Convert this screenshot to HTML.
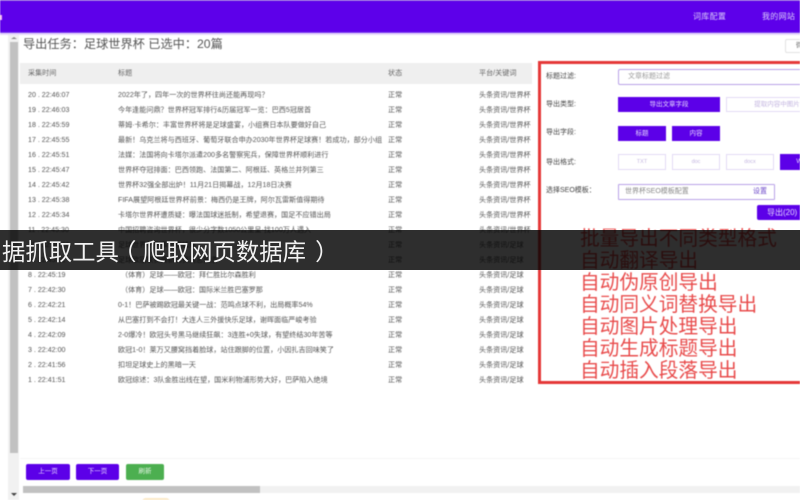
<!DOCTYPE html>
<html lang="zh">
<head>
<meta charset="utf-8">
<style>
html,body{margin:0;padding:0;width:800px;height:500px;overflow:hidden;background:#fff;font-family:"Liberation Sans","Noto Sans CJK SC",sans-serif}
#base{position:absolute;left:0;top:0;width:800px;height:500px;overflow:hidden;filter:blur(.65px)}
.a{position:absolute;white-space:nowrap}
.c{font-size:7.1px;line-height:15px;height:15px;color:#555}
.b{position:absolute;box-sizing:border-box;text-align:center;font-size:6.5px;white-space:nowrap}
.p{background:#5c00e8;color:#e6d8ff}
.o{background:#fff;border:1px solid #e3daf5;color:#c4b6e0}
.l{font-size:7px;color:#444;line-height:12px}
</style>
</head>
<body>
<div id="base">
  <div class="a" style="left:0;top:0;width:800px;height:33px;background:#5d00ea;border-top:1px solid #8a55d8;box-sizing:border-box;border-bottom:1px solid #7a3df0"></div>
  <div class="a" style="left:0;top:33px;width:800px;height:2px;background:#e6d8fb"></div>
  <div class="a" style="left:0;top:15px;width:2px;height:5px;background:#f2b8f0"></div>
  <div class="a" style="left:693px;top:11px;font-size:8px;line-height:12px;color:#dcd0fa;letter-spacing:.3px">词库配置</div>
  <div class="a" style="left:762px;top:11px;font-size:8px;line-height:12px;color:#dcd0fa;letter-spacing:.3px">我的网站</div>

  <div class="a" style="left:8px;top:35px;width:11px;height:465px;background:#f1f1f1"></div>
  <div class="a" style="left:10px;top:42px;width:8px;height:411px;background:#c1c1c1"></div>
  <div class="a" style="left:11px;top:37px;width:6px;height:2px;background:#888;clip-path:polygon(50% 0,100% 100%,0 100%)"></div>
  <div class="a" style="left:11px;top:493px;width:6px;height:3px;background:#444;clip-path:polygon(0 0,100% 0,50% 100%)"></div>

  <div class="a" style="left:23px;top:36px;font-size:12.2px;line-height:17px;color:#555">导出任务：足球世界杯 已选中：20篇</div>

  <div class="a" style="left:785px;top:39px;width:15px;height:14px;border:1px solid #e2e2e2;border-right:0;box-sizing:border-box;border-radius:2px 0 0 2px;font-size:6.5px;line-height:12px;color:#666;padding-left:10px;overflow:hidden">微</div>

  <div class="a" style="left:20px;top:63px;width:512px;height:21px;background:#efefef"></div>
  <div class="a c" style="left:28px;top:66px;color:#666">采集时间</div>
  <div class="a c" style="left:118px;top:66px;color:#666">标题</div>
  <div class="a c" style="left:388px;top:66px;color:#666">状态</div>
  <div class="a c" style="left:479px;top:66px;color:#666">平台/关键词</div>

  <div class="a c" style="left:28px;top:88px">20 . 22:46:07</div><div class="a c" style="left:118px;top:88px">2022年了，四年一次的世界杯往尚还能再现吗？</div><div class="a c" style="left:388px;top:88px">正常</div><div class="a c" style="left:479px;top:88px">头条资讯/世界杯</div>
  <div class="a c" style="left:28px;top:103px">19 . 22:46:03</div><div class="a c" style="left:118px;top:103px">今年逢能问鼎？世界杯冠军排行&amp;历届冠军一览：巴西5冠居首</div><div class="a c" style="left:388px;top:103px">正常</div><div class="a c" style="left:479px;top:103px">头条资讯/世界杯</div>
  <div class="a c" style="left:28px;top:118px">18 . 22:45:59</div><div class="a c" style="left:118px;top:118px">蒂姆·卡希尔：丰富世界杯将是足球盛宴，小组赛日本队要做好自己</div><div class="a c" style="left:388px;top:118px">正常</div><div class="a c" style="left:479px;top:118px">头条资讯/世界杯</div>
  <div class="a c" style="left:28px;top:133px">17 . 22:45:55</div><div class="a c" style="left:118px;top:133px">最新！乌克兰将与西班牙、葡萄牙联合申办2030年世界杯足球赛！若成功，部分小组</div><div class="a c" style="left:388px;top:133px">正常</div><div class="a c" style="left:479px;top:133px">头条资讯/世界杯</div>
  <div class="a c" style="left:28px;top:148px">16 . 22:45:51</div><div class="a c" style="left:118px;top:148px">法媒：法国将向卡塔尔派遣200多名警察宪兵，保障世界杯顺利进行</div><div class="a c" style="left:388px;top:148px">正常</div><div class="a c" style="left:479px;top:148px">头条资讯/世界杯</div>
  <div class="a c" style="left:28px;top:163px">15 . 22:45:47</div><div class="a c" style="left:118px;top:163px">世界杯夺冠排面：巴西领跑、法国第二、阿根廷、英格兰并列第三</div><div class="a c" style="left:388px;top:163px">正常</div><div class="a c" style="left:479px;top:163px">头条资讯/世界杯</div>
  <div class="a c" style="left:28px;top:178px">14 . 22:45:42</div><div class="a c" style="left:118px;top:178px">世界杯32强全部出炉！11月21日揭幕战，12月18日决赛</div><div class="a c" style="left:388px;top:178px">正常</div><div class="a c" style="left:479px;top:178px">头条资讯/世界杯</div>
  <div class="a c" style="left:28px;top:193px">13 . 22:45:38</div><div class="a c" style="left:118px;top:193px">FIFA展望阿根廷世界杯前景：梅西仍是王牌，阿尔瓦雷斯值得期待</div><div class="a c" style="left:388px;top:193px">正常</div><div class="a c" style="left:479px;top:193px">头条资讯/世界杯</div>
  <div class="a c" style="left:28px;top:208px">12 . 22:45:34</div><div class="a c" style="left:118px;top:208px">卡塔尔世界杯遭质疑：曝法国球迷抵制，希望退赛，国足不应错出局</div><div class="a c" style="left:388px;top:208px">正常</div><div class="a c" style="left:479px;top:208px">头条资讯/世界杯</div>
  <div class="a c" style="left:28px;top:223px">11 . 22:45:30</div><div class="a c" style="left:118px;top:223px">中国招聘咨询世界杯，很少分字数1050公里呈-找100万人遇入</div><div class="a c" style="left:388px;top:223px">正常</div><div class="a c" style="left:479px;top:223px">头条资讯/世界杯</div>
  <div class="a c" style="left:28px;top:238px">10 . 22:45:26</div><div class="a c" style="left:118px;top:238px">足球世界杯赛事比赛结果</div><div class="a c" style="left:388px;top:238px">正常</div><div class="a c" style="left:479px;top:238px">头条资讯/足球</div>
  <div class="a c" style="left:28px;top:253px">9 . 22:45:22</div><div class="a c" style="left:118px;top:253px">足球欧冠联赛最新比赛消息报道</div><div class="a c" style="left:388px;top:253px">正常</div><div class="a c" style="left:479px;top:253px">头条资讯/足球</div>
  <div class="a c" style="left:28px;top:268px">8 . 22:45:19</div><div class="a c" style="left:121px;top:268px">（体育）足球——欧冠：拜仁胜比尔森胜利</div><div class="a c" style="left:388px;top:268px">正常</div><div class="a c" style="left:479px;top:268px">头条资讯/足球</div>
  <div class="a c" style="left:28px;top:283px">7 . 22:42:30</div><div class="a c" style="left:121px;top:283px">（体育）足球——欧冠：国际米兰胜巴塞罗那</div><div class="a c" style="left:388px;top:283px">正常</div><div class="a c" style="left:479px;top:283px">头条资讯/足球</div>
  <div class="a c" style="left:28px;top:298px">6 . 22:42:21</div><div class="a c" style="left:118px;top:298px">0-1！巴萨被踢欧冠最关键一战：范鸣点球不利，出局概率54%</div><div class="a c" style="left:388px;top:298px">正常</div><div class="a c" style="left:479px;top:298px">头条资讯/足球</div>
  <div class="a c" style="left:28px;top:313px">5 . 22:42:14</div><div class="a c" style="left:118px;top:313px">从巴塞打到不会打！大连人三外援快乐足球，谢晖面临严峻考验</div><div class="a c" style="left:388px;top:313px">正常</div><div class="a c" style="left:479px;top:313px">头条资讯/足球</div>
  <div class="a c" style="left:28px;top:328px">4 . 22:42:09</div><div class="a c" style="left:118px;top:328px">2-0爆冷！欧冠头号黑马继续狂飙：3连胜+0失球，有望终结30年苦等</div><div class="a c" style="left:388px;top:328px">正常</div><div class="a c" style="left:479px;top:328px">头条资讯/足球</div>
  <div class="a c" style="left:28px;top:343px">3 . 22:42:00</div><div class="a c" style="left:118px;top:343px">欧冠1-0！莱万又腰窝挡着脸球，站住跟脚的位置，小因扎吉回味笑了</div><div class="a c" style="left:388px;top:343px">正常</div><div class="a c" style="left:479px;top:343px">头条资讯/足球</div>
  <div class="a c" style="left:28px;top:358px">2 . 22:41:56</div><div class="a c" style="left:118px;top:358px">扣坦足球史上的黑暗一天</div><div class="a c" style="left:388px;top:358px">正常</div><div class="a c" style="left:479px;top:358px">头条资讯/足球</div>
  <div class="a c" style="left:28px;top:373px">1 . 22:41:51</div><div class="a c" style="left:118px;top:373px">欧冠综述：3队金胜出线在望，国米利物浦形势大好，巴萨陷入绝境</div><div class="a c" style="left:388px;top:373px">正常</div><div class="a c" style="left:479px;top:373px">头条资讯/足球</div>

  <div class="a" style="left:20px;top:458px;width:780px;height:1px;background:#f6f6f6"></div>
  <div class="b" style="left:26px;top:464px;width:44px;height:16px;line-height:16px;background:#5c00e8;color:#e6d8ff;border-radius:2px">上一页</div>
  <div class="b" style="left:76px;top:464px;width:43px;height:16px;line-height:16px;background:#5c00e8;color:#e6d8ff;border-radius:2px">下一页</div>
  <div class="b" style="left:126px;top:464px;width:38px;height:16px;line-height:16px;background:#4caf50;color:#e6f5e6;border-radius:2px">刷新</div>
  <div class="a" style="left:23px;top:486px;width:777px;height:7px;background:#f1f1f1"></div>
  <div class="a" style="left:23px;top:486px;width:237px;height:7px;background:#c1c1c1"></div>
  <div class="a" style="left:142px;top:498px;width:28px;height:4px;border-radius:14px 14px 0 0;background:#fbe9c8"></div>

  <div class="a l" style="left:546px;top:71px">标题过滤:</div>
  <div class="a" style="left:618px;top:69px;width:190px;height:16px;box-sizing:border-box;border:1px solid #b9a2e8;border-radius:2px;font-size:7px;line-height:14px;color:#999;padding-left:9px">文章标题过滤</div>
  <div class="a l" style="left:546px;top:99px">导出类型:</div>
  <div class="b p" style="left:618px;top:97px;width:102px;height:15px;line-height:15px">导出文章字段</div>
  <div class="b o" style="left:726px;top:97px;width:102px;height:15px;line-height:13px">提取内容中图片</div>
  <div class="a l" style="left:546px;top:127px">导出字段:</div>
  <div class="b p" style="left:618px;top:126px;width:48px;height:15px;line-height:15px">标题</div>
  <div class="b p" style="left:672px;top:126px;width:48px;height:15px;line-height:15px">内容</div>
  <div class="a l" style="left:546px;top:157px">导出格式:</div>
  <div class="b o" style="left:618px;top:154px;width:48px;height:16px;line-height:14px;font-size:5.5px">TXT</div>
  <div class="b o" style="left:672px;top:154px;width:48px;height:16px;line-height:14px;font-size:5.5px">doc</div>
  <div class="b o" style="left:726px;top:154px;width:48px;height:16px;line-height:14px;font-size:5.5px">docx</div>
  <div class="b p" style="left:780px;top:154px;width:48px;height:16px;line-height:16px">Word</div>
  <div class="a l" style="left:546px;top:185px">选择SEO模板：</div>
  <div class="a" style="left:618px;top:184px;width:157px;height:16px;box-sizing:border-box;border:1px solid #b9a2e8;border-radius:1px;font-size:7px;line-height:14px;color:#888;padding-left:6px">世界杯SEO模板配置</div>
  <div class="a" style="left:753px;top:185px;font-size:7px;line-height:14px;color:#6a45c8">设置</div>
  <div class="a" style="left:757px;top:205px;width:60px;height:15px;box-sizing:border-box;background:#5c00e8;color:#e6d8ff;border-radius:2px;font-size:8px;line-height:15px;padding-left:10px">导出(20)</div>

  <div class="a" style="left:538px;top:61px;width:270px;height:323px;box-sizing:border-box;border:3px solid #e53838"></div>
  <div class="a" style="left:580px;top:228px;font-size:19.7px;line-height:22px;color:#e84b4b;white-space:pre">批量导出不同类型格式
自动翻译导出
自动伪原创导出
自动同义词替换导出
自动图片处理导出
自动生成标题导出
自动插入段落导出</div>
</div>

<div class="a" style="left:0;top:230px;width:800px;height:40px;background:rgba(0,0,0,.82)"></div>
<div class="a" style="left:2px;top:236px;font-size:23.4px;line-height:28px;color:#f2f2f2;filter:blur(.3px);font-family:'WenQuanYi Zen Hei','Noto Sans CJK SC',sans-serif">据抓取工具<span style="position:relative;left:-6px">（</span>爬取网页数据库<span style="position:relative;left:9px">）</span></div>
</body>
</html>
